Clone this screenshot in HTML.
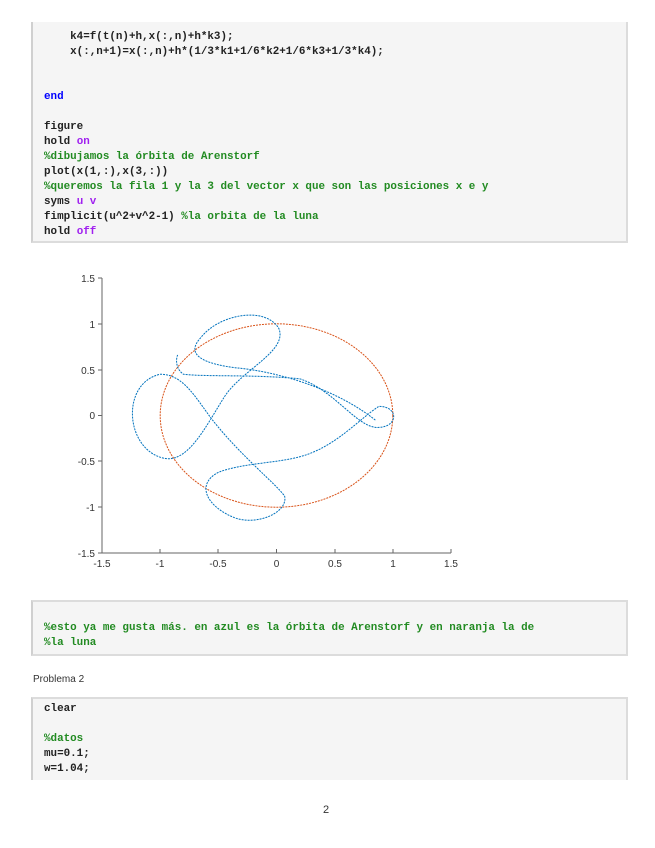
<!DOCTYPE html>
<html><head><meta charset="utf-8"><style>
body{margin:0;width:655px;height:848px;background:#fff;position:relative;overflow:hidden}
.box{position:absolute;left:31px;width:593px;background:#f5f5f5;border:2px solid #dcdcdc;border-left-color:#d0d0d0}
.l{position:absolute;left:44px;font:bold 10.9px/15px "Liberation Mono",monospace;color:#222;white-space:pre}
.g{color:#228b22}.b{color:#0000ff}.p{color:#a020f0}
.t{position:absolute;font:10px "Liberation Sans",sans-serif;color:#333}
</style></head><body>
<div class="box" style="top:22px;height:219px;border-top:none"></div>
<div class="l" style="top:30px">    k4=f(t(n)+h,x(:,n)+h*k3);</div>
<div class="l" style="top:45px">    x(:,n+1)=x(:,n)+h*(1/3*k1+1/6*k2+1/6*k3+1/3*k4);</div>
<div class="l b" style="top:90px">end</div>
<div class="l" style="top:120px">figure</div>
<div class="l" style="top:135px">hold <span class="p">on</span></div>
<div class="l g" style="top:150px">%dibujamos la órbita de Arenstorf</div>
<div class="l" style="top:165px">plot(x(1,:),x(3,:))</div>
<div class="l g" style="top:180px">%queremos la fila 1 y la 3 del vector x que son las posiciones x e y</div>
<div class="l" style="top:195px">syms <span class="p">u v</span></div>
<div class="l" style="top:210px">fimplicit(u^2+v^2-1) <span class="g">%la orbita de la luna</span></div>
<div class="l" style="top:225px">hold <span class="p">off</span></div>

<svg style="position:absolute;left:0;top:0" width="655" height="600">
<g stroke="#666" stroke-width="1" fill="none">
<path d="M102 278V553H451"/>
<path d="M98 278h4M98 324h4M98 370h4M98 415.5h4M98 461h4M98 507h4M98 553h4"/>
<path d="M102 553v-4M160 553v-4M218 553v-4M276.5 553v-4M335 553v-4M393 553v-4M451 553v-4"/>
</g>
<g font-family="Liberation Sans,sans-serif" font-size="10" fill="#333" text-anchor="end">
<text x="95" y="282">1.5</text><text x="95" y="328">1</text><text x="95" y="374">0.5</text><text x="95" y="419">0</text><text x="95" y="465">-0.5</text><text x="95" y="511">-1</text><text x="95" y="557">-1.5</text>
</g>
<g font-family="Liberation Sans,sans-serif" font-size="10" fill="#333" text-anchor="middle">
<text x="102" y="567">-1.5</text><text x="160" y="567">-1</text><text x="218" y="567">-0.5</text><text x="276.5" y="567">0</text><text x="335" y="567">0.5</text><text x="393" y="567">1</text><text x="451" y="567">1.5</text>
</g>
<ellipse cx="276.5" cy="415.5" rx="116.3" ry="91.7" fill="none" stroke="#d95319" stroke-width="1" stroke-dasharray="2 1"/>
<g transform="translate(276.5 415.5) scale(116.3 -91.7)">
<path fill="none" stroke="#0072bd" stroke-width="1" vector-effect="non-scaling-stroke" stroke-dasharray="2 1"
d="M0.85,-0.05 C0.5,0.3 0,0.48 -0.35,0.52 C-0.6,0.56 -0.8,0.65 -0.65,0.85 C-0.5,1.1 -0.1,1.2 0.02,0.95 C0.1,0.7 -0.3,0.5 -0.45,0.2 C-0.6,-0.1 -0.75,-0.5 -0.95,-0.47 C-1.3,-0.4 -1.35,0.35 -1.0,0.45 C-0.8,0.45 -0.7,0.2 -0.55,-0.05 C-0.3,-0.45 0,-0.75 0.07,-0.88 C0.1,-1.05 -0.15,-1.2 -0.35,-1.12 C-0.6,-1.0 -0.7,-0.75 -0.5,-0.62 C-0.3,-0.52 0,-0.52 0.2,-0.45 C0.5,-0.35 0.7,-0.05 0.88,0.1 C1.05,0.1 1.05,-0.12 0.88,-0.13 C0.7,-0.15 0.5,0.28 0.2,0.4 C-0.2,0.45 -0.6,0.42 -0.8,0.45 C-0.86,0.5 -0.87,0.6 -0.85,0.66"/>
</g>
</svg>

<div class="box" style="top:600px;height:52px"></div>
<div class="l g" style="top:621px">%esto ya me gusta más. en azul es la órbita de Arenstorf y en naranja la de</div>
<div class="l g" style="top:636px">%la luna</div>
<div class="t" style="left:33px;top:674px">Problema 2</div>
<div class="box" style="top:697px;height:81px;border-bottom:none"></div>
<div class="l" style="top:702px">clear</div>
<div class="l g" style="top:732px">%datos</div>
<div class="l" style="top:747px">mu=0.1;</div>
<div class="l" style="top:762px">w=1.04;</div>
<div class="t" style="left:323px;top:804px;font-size:11px">2</div>
</body></html>
